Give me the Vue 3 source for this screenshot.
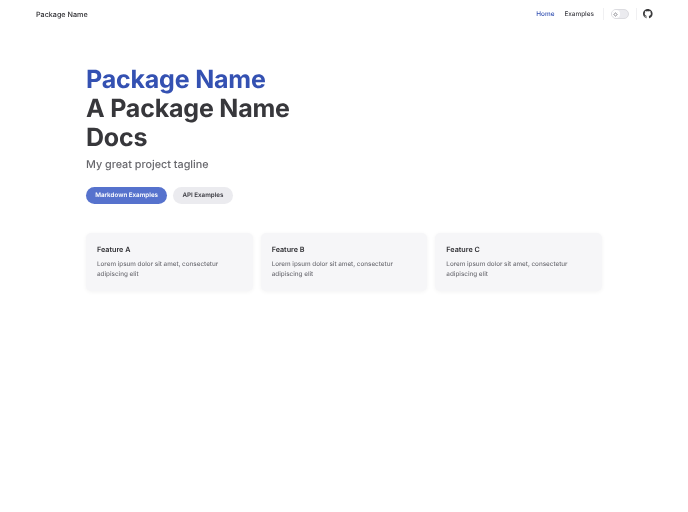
<script setup>
const features = [
  { title: 'Feature A', text: 'Lorem ipsum dolor sit amet, consectetur adipiscing elit' },
  { title: 'Feature B', text: 'Lorem ipsum dolor sit amet, consectetur adipiscing elit' },
  { title: 'Feature C', text: 'Lorem ipsum dolor sit amet, consectetur adipiscing elit' },
]
</script>

<template>
  <div class="page">
    <header class="nav">
      <span class="brand">Package Name</span>
      <nav class="links">
        <a class="link active">Home</a>
        <a class="link">Examples</a>
        <span class="divider"></span>
        <span class="switch">
          <span class="knob">
            <svg viewBox="0 0 24 24" width="5" height="5" fill="none" stroke="#6b6b73" stroke-width="2.5">
              <circle cx="12" cy="12" r="6" />
              <path d="M12 1v3M12 20v3M1 12h3M20 12h3M4.2 4.2l2 2M17.8 17.8l2 2M4.2 19.800l2-2M17.800 6.200l2-2" />
            </svg>
          </span>
        </span>
        <span class="divider"></span>
        <svg class="github" viewBox="0 0 16 16" width="9.6" height="9.6" fill="#3a3a3c">
          <path d="M8 0C3.580 0 0 3.580 0 8c0 3.540 2.290 6.530 5.470 7.590.4.070.55-.17.55-.38 0-.19-.01-.82-.01-1.490-2.010.37-2.530-.49-2.690-.94-.09-.23-.48-.94-.82-1.130-.28-.15-.68-.52-.01-.53.630-.01 1.080.58 1.230.82.720 1.210 1.870.87 2.330.66.070-.52.280-.87.510-1.070-1.780-.2-3.640-.89-3.640-3.950 0-.87.310-1.590.820-2.150-.08-.2-.36-1.020.08-2.120 0 0 .67-.21 2.200.82.640-.18 1.320-.27 2-.27s1.360.09 2 .27c1.530-1.040 2.200-.82 2.200-.82.440 1.100.16 1.920.08 2.120.51.560.82 1.270.82 2.150 0 3.070-1.870 3.750-3.650 3.950.29.250.54.730.54 1.480 0 1.070-.01 1.930-.01 2.200 0 .21.150.46.550.38A8.010 8.010 0 0 0 16 8c0-4.420-3.580-8-8-8z" />
        </svg>
      </nav>
    </header>

    <main class="content">
      <section class="hero">
        <h1 class="title">
          <span class="name">Package Name</span>
          <span class="text">A Package Name Docs</span>
        </h1>
        <p class="tagline">My great project tagline</p>
        <div class="actions">
          <a class="btn primary">Markdown Examples</a>
          <a class="btn secondary">API Examples</a>
        </div>
      </section>

      <section class="features">
        <article v-for="f in features" :key="f.title" class="card">
          <h2 class="card-title">{{ f.title }}</h2>
          <p class="card-text">{{ f.text }}</p>
        </article>
      </section>
    </main>
  </div>
</template>

<style>
html, body { margin: 0; background: #fff; }
</style>

<style scoped>
.page {
  width: 688px;
  height: 512px;
  overflow: hidden;
  background: #fff;
  font-family: Inter, "Liberation Sans", sans-serif;
  color: #3c3c43;
  text-rendering: geometricPrecision;
  filter: blur(0.25px);
}
.nav {
  height: 28px;
  display: flex;
  align-items: center;
  justify-content: space-between;
  padding: 0 35.500px 0 36px;
}
.brand {
  font-size: 7.2px;
  font-weight: 500;
  color: #2f2f33;
}
.links {
  display: flex;
  align-items: center;
}
.link {
  font-size: 6.4px;
  font-weight: 500;
  color: #3c3c43;
  margin-right: 10px;
}
.link.active { color: #3451b2; }
.link:nth-child(2) { margin-right: 9px; }
.divider {
  width: 1px;
  height: 12px;
  background: #f0f0f2;
}
.switch {
  width: 18px;
  height: 10px;
  margin: 0 7px 0 7px;
  box-sizing: border-box;
  border: 1px solid #dcdce0;
  border-radius: 5px;
  background: #ebebef;
  display: flex;
  align-items: center;
}
.knob {
  width: 8px;
  height: 8px;
  border-radius: 50%;
  background: #fff;
  display: flex;
  align-items: center;
  justify-content: center;
}
.github { margin-left: 6px; }
.content {
  padding: 38px 86px 0;
}
.title {
  margin: 0;
  width: 250px;
  font-size: 25px;
  line-height: 29px;
  font-weight: 700;
  letter-spacing: -0.2px;
}
.name { display: block; color: #3451b2; }
.text { display: block; color: #37373b; }
.tagline {
  margin: 4px 0 0;
  font-size: 10.8px;
  line-height: 16px;
  font-weight: 500;
  color: #67676c;
}
.actions {
  display: flex;
  gap: 6px;
  margin-top: 14px;
}
.btn {
  height: 17px;
  line-height: 17px;
  padding: 0 9.200px;
  border-radius: 9px;
  font-size: 6.250px;
  font-weight: 600;
}
.primary { background: #5672cd; color: #fff; }
.secondary { background: #ebebef; color: #3c3c43; }
.features {
  display: flex;
  gap: 8px;
  margin-top: 29px;
  width: 516px;
}
.card {
  flex: 1;
  height: 58px;
  box-sizing: border-box;
  padding: 11px;
  border-radius: 5px;
  background: #f6f6f8;
  box-shadow: 0 1px 4px rgba(0, 0, 0, 0.05);
}
.card-title {
  margin: 0;
  font-size: 7.2px;
  line-height: 12px;
  font-weight: 600;
  color: #2f2f33;
}
.card-text {
  margin: 3px 0 0;
  font-size: 6.300px;
  line-height: 10.4px;
  font-weight: 500;
  color: #727278;
}
</style>
